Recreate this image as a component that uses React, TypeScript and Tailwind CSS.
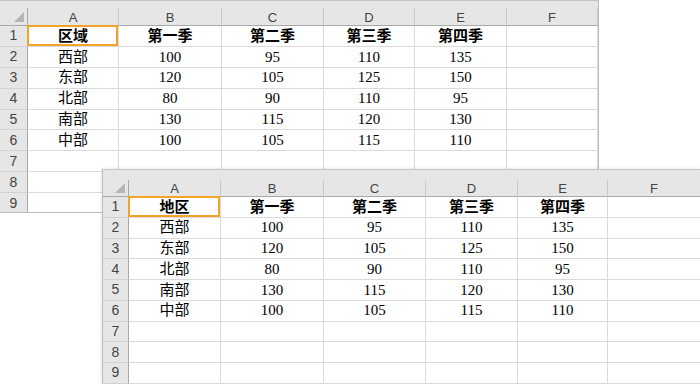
const letters = ["A", "B", "C", "D", "E", "F"];

const rows = [
  ["西部", "100", "95", "110", "135"],
  ["东部", "120", "105", "125", "150"],
  ["北部", "80", "90", "110", "95"],
  ["南部", "130", "115", "120", "130"],
  ["中部", "100", "105", "115", "110"],
];

interface SheetProps {
  title: string;
  widths: string[]; // [rowHeader, A..F]
  band: string;
  head: string;
  rowH: string;
}

function Corner({ w, h }: { w: string; h: string }) {
  return (
    <div className={`${w} ${h} relative shrink-0 bg-[#e6e6e6] border-r border-b border-[#a8a8a8]`}>
      <svg className="absolute right-[3px] bottom-[3px]" width="10" height="10" viewBox="0 0 10 10">
        <polygon points="10,0 10,10 0,10" fill="#b5b5b5" />
      </svg>
    </div>
  );
}

function Sheet({ title, widths, band, head, rowH }: SheetProps) {
  const body = [["", "第一季", "第二季", "第三季", "第四季", ""]]
    .concat(rows.map((r) => [...r, ""]))
    .concat([["", "", "", "", "", ""], ["", "", "", "", "", ""], ["", "", "", "", "", ""]]);
  body[0][0] = title;

  return (
    <div className="flex flex-col bg-white">
      <div className={`${band} bg-[#e6e6e6] border-t border-[#c4c4c4]`} />
      <div className="flex">
        <Corner w={widths[0]} h={head} />
        {letters.map((l, i) => (
          <div
            key={l}
            className={`${widths[i + 1]} ${head} shrink-0 flex items-end justify-center pb-[1px] bg-[#e6e6e6] border-r border-b border-r-[#c9c9c9] border-b-[#a8a8a8] text-[13px] leading-none text-[#444] font-[family-name:'Liberation_Sans',Arial,sans-serif]`}
          >
            {l}
          </div>
        ))}
      </div>
      {body.map((r, ri) => (
        <div key={ri} className="flex">
          <div
            className={`${widths[0]} ${rowH} shrink-0 flex items-center justify-center bg-[#e6e6e6] border-r border-b border-r-[#a8a8a8] border-b-[#d2d2d2] text-[14px] text-[#444] font-[family-name:'Liberation_Sans',Arial,sans-serif]`}
          >
            {ri + 1}
          </div>
          {r.map((c, ci) => (
            <div
              key={ci}
              className={`${widths[ci + 1]} ${rowH} relative shrink-0 flex items-center justify-center border-r border-b border-[#dadada] text-[15px] text-black font-[family-name:'Liberation_Serif','Noto_Sans_CJK_SC',serif] ${ri === 0 ? "font-bold" : ""}`}
            >
              {c}
              {ri === 0 && ci === 0 && (
                <div className="absolute -left-[1px] -top-[1px] -right-[0px] -bottom-[0px] border-2 border-[#f3a22a]" />
              )}
            </div>
          ))}
        </div>
      ))}
    </div>
  );
}

export default function App() {
  return (
    <div className="relative w-[700px] h-[384px] overflow-hidden bg-white">
      <div className="w-[599px] h-[213px] overflow-hidden border-r border-b border-[#bdbdbd]">
        <Sheet
          title="区域"
          widths={["w-[28px]", "w-[91px]", "w-[103px]", "w-[102px]", "w-[91px]", "w-[92px]", "w-[91px]"]}
          band="h-[8px]"
          head="h-[18px]"
          rowH="h-[20.9px]"
        />
      </div>
      <div className="absolute left-[102px] top-[169px] right-0 bottom-0 overflow-hidden border-l border-[#bdbdbd] shadow-[-1px_-1px_2px_rgba(0,0,0,0.08)]">
        <Sheet
          title="地区"
          widths={["w-[26px]", "w-[92px]", "w-[103px]", "w-[102px]", "w-[92px]", "w-[90px]", "w-[93px]"]}
          band="h-[11px]"
          head="h-[17px]"
          rowH="h-[20.75px]"
        />
      </div>
    </div>
  );
}
